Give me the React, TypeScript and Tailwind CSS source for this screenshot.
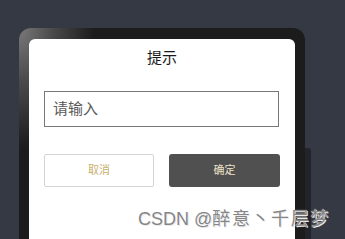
import React from "react";

export default function App() {
  return (
    <div
      className="relative h-[239px] w-[345px] overflow-hidden bg-[#343943] pl-[19px] pt-[28px]"
      style={{ fontFamily: '"Liberation Sans", "Noto Sans CJK SC", sans-serif' }}
    >
      <div className="relative w-[286px] h-[240px]">
        <div className="h-full w-full rounded-t-[12px] bg-[#1c1c1c] bg-[radial-gradient(ellipse_75px_120px_at_0_0,#7a7a7a_0%,#4a4a4a_45%,#1c1c1c_100%)] px-[10px] pt-[11px]">
          <div className="h-full w-full rounded-t-[6px] bg-white">
            <div className="pt-[9px] text-center text-[15px] leading-[20px] text-[#1a1a1a]">提示</div>
            <div className="mt-[23px] ml-[15px] flex h-[36px] w-[235px] items-center border border-[#777] pl-[8px] text-[15px] text-[#5a5a5a]">
              请输入
            </div>
            <div className="mt-[27px] ml-[15px] flex gap-[15px]">
              <div className="flex h-[33px] w-[110px] items-center justify-center rounded-[2px] border border-[#d4d4d4] text-[11px] text-[#c9b06b]">
                取消
              </div>
              <div className="flex h-[33px] w-[111px] items-center justify-center rounded-[3px] bg-[#505050] text-[11px] text-[#eee3c8]">
                确定
              </div>
            </div>
          </div>
        </div>
        <div className="absolute left-[286px] top-[120px] h-[120px] w-[6px] rounded-tr-[3px] bg-[#222429]" />
      </div>
      <div
        className="absolute left-[138px] top-[208px] text-[18px] leading-[22px] text-[#858585]"
        style={{ textShadow: "0 0 1px #fff, 1px 1px 0 #e8e8e8" }}
      >
        CSDN @<span className="tracking-[1.6px]">醉意丶千层梦</span>
      </div>
    </div>
  );
}
